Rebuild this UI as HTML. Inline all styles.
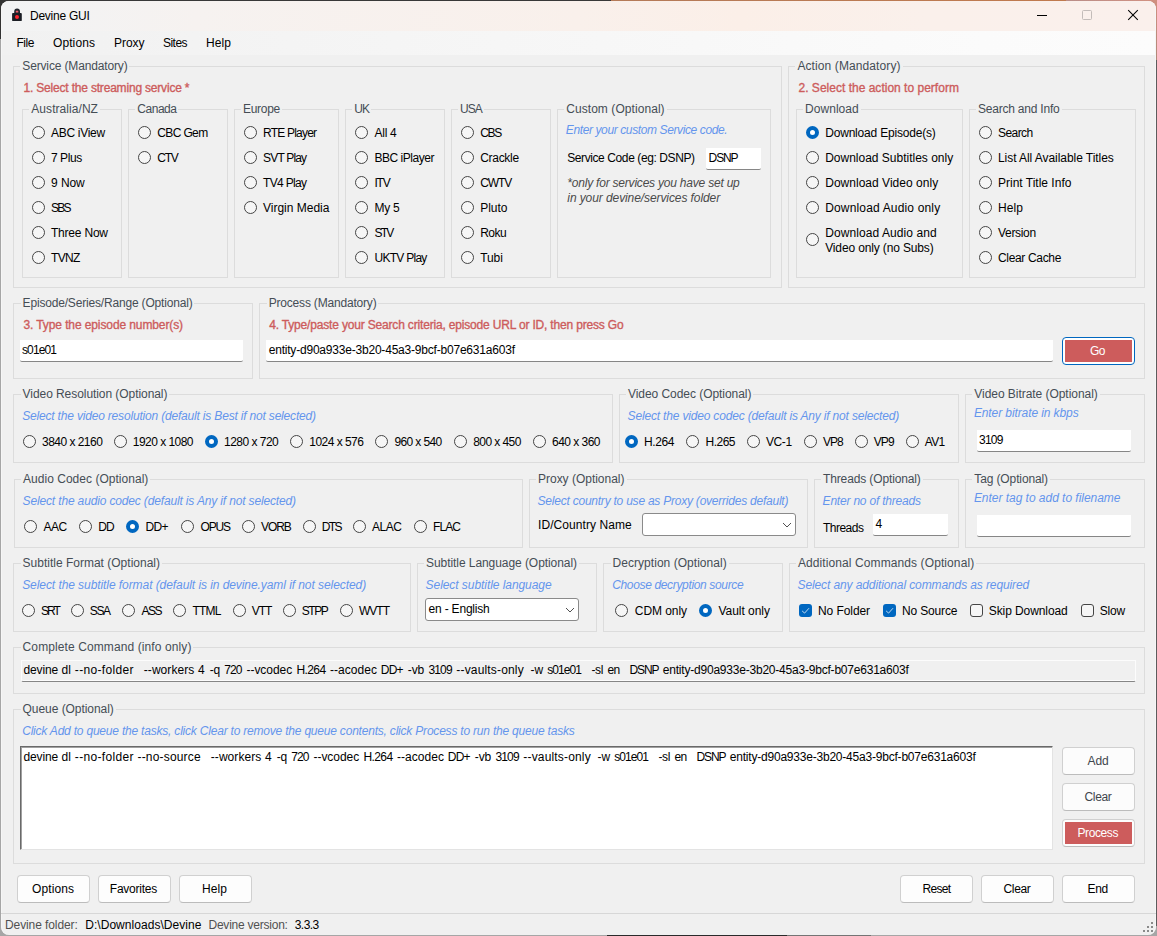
<!DOCTYPE html>
<html><head><meta charset="utf-8"><title>Devine GUI</title>
<style>
html,body{margin:0;padding:0;}
body{width:1157px;height:936px;overflow:hidden;background:#bdbdbd;position:relative;font-family:"Liberation Sans",sans-serif;}
#win{position:absolute;left:0;top:0;width:1157px;height:936px;overflow:hidden;}
#win div,#win span,#win svg{position:absolute;box-sizing:border-box;}
#desk{left:0;top:0;width:1157px;height:936px;background:#a6a6a6;}
#frame{left:1px;top:1px;width:1155px;height:934px;border-radius:8px;background:#f0f0f0;overflow:hidden;}
#frame:after{content:'';position:absolute;left:0;top:0;right:0;bottom:0;border-radius:8px;box-shadow:inset 1px 0 0 #f6f6f6,inset -1px 0 0 #f6f6f6;pointer-events:none;}
#tbar{left:0;top:0;width:1155px;height:30px;background:linear-gradient(90deg,#f2f3f4 0,#f3f3f3 4%,#f6f2f0 17%,#f9f0eb 50%,#fbefe8 64%,#faf0eb 80%,#faf0ec 100%);}
#mbar{left:0;top:30px;width:1155px;height:24px;background:linear-gradient(90deg,#f1f1f1 0,#f4f4f4 25%,#f7f7f7 52%,#fbfbfb 85%,#fcfcfc 100%);}
.t{white-space:pre;font-size:12px;line-height:16px;height:16px;color:#000;}
.gt{color:#454d55;}
.red{color:#cd5c5c;-webkit-text-stroke:0.35px #cd5c5c;}
.hint{color:#6495ed;font-style:italic;}
.note{color:#4a4a4a;font-style:italic;}
.st{color:#505050;}
.w{color:#fff;}
.dis{color:#41464c;}
.gb{border:1px solid #dcdcdc;}
.mask{background:#f0f0f0;}
.rd{border:1px solid #454545;border-radius:50%;background:#f6f6f6;}
.rd.on{border:4px solid #0067c0;background:#fff;}
.cb{border:1px solid #454545;border-radius:3px;background:#f6f6f6;}
.cb.on{border:none;background:#0067c0;}
.cb svg{left:0;top:0;}
.in{background:#fff;border-bottom:1px solid #868686;border-radius:0 0 2px 2px;}
.in.ro{background:#f0f0f0;border:1px solid #fcfcfc;border-bottom:1px solid #868686;box-shadow:inset 0 -1px 0 #fcfcfc;border-radius:0 0 2px 2px;}
.combo{background:#fff;border:1px solid #8a8a8a;border-radius:3px;}
.ta{background:#fff;border-top:1px solid #696969;border-left:1px solid #696969;border-right:1px solid #e3e3e3;border-bottom:1px solid #e3e3e3;box-shadow:inset 1px 1px 0 #a0a0a0;}
.btn{background:#fdfdfd;border:1px solid #d0d0d0;border-bottom-color:#bcbcbc;border-radius:4px;}
.btn.dis{background:#fcfcfc;}
.btn.redf{border:1px solid #0067c0;background:#fff;box-shadow:inset 0 0 0 1px #fff;}
.redfill{background:#cd5c5c;}
.sep{background:#d7d7d7;}

</style></head>
<body>
<div id="win">
<div id="desk"></div>
<div style="left:0;top:0;width:611px;height:12px;background:#383838"></div>
<div style="left:611px;top:0;width:455px;height:12px;background:linear-gradient(90deg,#b47a58,#c07a4e)"></div>
<div style="left:1066px;top:0;width:91px;height:12px;background:linear-gradient(90deg,#b98d88,#d29282)"></div>
<div style="left:0;top:0;width:8px;height:39px;background:#333"></div>
<div style="left:1149px;top:0;width:8px;height:60px;background:linear-gradient(180deg,#d09080,#b08878)"></div>
<div style="left:607px;top:926px;width:180px;height:10px;background:#2a2a2a"></div>
<div style="left:787px;top:926px;width:84px;height:10px;background:#747474"></div>
<div style="left:1150px;top:60px;width:7px;height:866px;background:#5c5c5c"></div>
<div id="frame">
 <div id="tbar"></div>
 <div id="mbar"></div>
</div>
<!-- app icon -->
<svg style="left:9px;top:7px" width="16" height="16" viewBox="0 0 16 16">
 <path d="M5.2 7 V4.5 A2.9 2.9 0 0 1 11 4.5 V7 Z" fill="#23262d"/>
 <rect x="3.1" y="6" width="9.7" height="8.1" rx="0.9" fill="#1b1e25"/>
 <rect x="6.8" y="3.7" width="2.5" height="1.7" rx="0.5" fill="#f0606c"/>
 <circle cx="8" cy="10" r="2" fill="#ff2630"/>
</svg>
<!-- window controls -->
<svg style="left:1036px;top:9px" width="14" height="14" viewBox="0 0 14 14"><path d="M1 6.5 H11" stroke="#000" stroke-width="1"/></svg>
<svg style="left:1080px;top:8px" width="14" height="14" viewBox="0 0 14 14"><rect x="2.5" y="2.5" width="9" height="9" rx="1" fill="none" stroke="#c3bcb9" stroke-width="1"/></svg>
<svg style="left:1125px;top:8px" width="16" height="16" viewBox="0 0 16 16"><path d="M3.2 2.2 L12.8 11.8 M12.8 2.2 L3.2 11.8" stroke="#000" stroke-width="1.05" stroke-linecap="butt"/></svg>
<!-- resize grip -->
<svg style="left:1142px;top:920px" width="12" height="12" viewBox="0 0 12 12" shape-rendering="crispEdges">
 <g fill="#8a8a8a"><rect x="9" y="2" width="2" height="2"/><rect x="5" y="6" width="2" height="2"/><rect x="9" y="6" width="2" height="2"/><rect x="1" y="10" width="2" height="2"/><rect x="5" y="10" width="2" height="2"/><rect x="9" y="10" width="2" height="2"/></g>
</svg>

<div class="gb" style="left:13px;top:66px;width:769px;height:222px;"></div>
<div class="mask" style="left:20.3px;top:65px;width:109.2px;height:3px;"></div>
<div class="gb" style="left:22px;top:109px;width:100px;height:169px;"></div>
<div class="mask" style="left:29.3px;top:108px;width:70.7px;height:3px;"></div>
<div class="gb" style="left:128px;top:109px;width:100px;height:169px;"></div>
<div class="mask" style="left:135.3px;top:108px;width:43.19999999999999px;height:3px;"></div>
<div class="gb" style="left:234px;top:109px;width:105px;height:169px;"></div>
<div class="mask" style="left:241px;top:108px;width:41px;height:3px;"></div>
<div class="gb" style="left:345px;top:109px;width:100px;height:169px;"></div>
<div class="mask" style="left:352.3px;top:108px;width:18.69999999999999px;height:3px;"></div>
<div class="gb" style="left:451px;top:109px;width:100px;height:169px;"></div>
<div class="mask" style="left:458px;top:108px;width:25.69999999999999px;height:3px;"></div>
<div class="gb" style="left:557px;top:109px;width:214px;height:169px;"></div>
<div class="mask" style="left:564.2px;top:108px;width:102.5px;height:3px;"></div>
<div class="rd" style="left:32.0px;top:126.0px;width:13px;height:13px;"></div>
<div class="rd" style="left:32.0px;top:151.0px;width:13px;height:13px;"></div>
<div class="rd" style="left:32.0px;top:176.0px;width:13px;height:13px;"></div>
<div class="rd" style="left:32.0px;top:201.0px;width:13px;height:13px;"></div>
<div class="rd" style="left:32.0px;top:226.0px;width:13px;height:13px;"></div>
<div class="rd" style="left:32.0px;top:251.0px;width:13px;height:13px;"></div>
<div class="rd" style="left:138.0px;top:126.0px;width:13px;height:13px;"></div>
<div class="rd" style="left:138.0px;top:151.0px;width:13px;height:13px;"></div>
<div class="rd" style="left:244.0px;top:126.0px;width:13px;height:13px;"></div>
<div class="rd" style="left:244.0px;top:151.0px;width:13px;height:13px;"></div>
<div class="rd" style="left:244.0px;top:176.0px;width:13px;height:13px;"></div>
<div class="rd" style="left:244.0px;top:201.0px;width:13px;height:13px;"></div>
<div class="rd" style="left:355.0px;top:126.0px;width:13px;height:13px;"></div>
<div class="rd" style="left:355.0px;top:151.0px;width:13px;height:13px;"></div>
<div class="rd" style="left:355.0px;top:176.0px;width:13px;height:13px;"></div>
<div class="rd" style="left:355.0px;top:201.0px;width:13px;height:13px;"></div>
<div class="rd" style="left:355.0px;top:226.0px;width:13px;height:13px;"></div>
<div class="rd" style="left:355.0px;top:251.0px;width:13px;height:13px;"></div>
<div class="rd" style="left:461.0px;top:126.0px;width:13px;height:13px;"></div>
<div class="rd" style="left:461.0px;top:151.0px;width:13px;height:13px;"></div>
<div class="rd" style="left:461.0px;top:176.0px;width:13px;height:13px;"></div>
<div class="rd" style="left:461.0px;top:201.0px;width:13px;height:13px;"></div>
<div class="rd" style="left:461.0px;top:226.0px;width:13px;height:13px;"></div>
<div class="rd" style="left:461.0px;top:251.0px;width:13px;height:13px;"></div>
<div class="in" style="left:706px;top:148px;width:55px;height:22px;"></div>
<div class="gb" style="left:788px;top:66px;width:357px;height:222px;"></div>
<div class="mask" style="left:795.4px;top:65px;width:107.20000000000005px;height:3px;"></div>
<div class="gb" style="left:796px;top:109px;width:167px;height:169px;"></div>
<div class="mask" style="left:803px;top:108px;width:57.799999999999955px;height:3px;"></div>
<div class="gb" style="left:969px;top:109px;width:167px;height:169px;"></div>
<div class="mask" style="left:976px;top:108px;width:85.5px;height:3px;"></div>
<div class="rd on" style="left:806.0px;top:126.0px;width:13px;height:13px;"></div>
<div class="rd" style="left:806.0px;top:151.0px;width:13px;height:13px;"></div>
<div class="rd" style="left:806.0px;top:176.0px;width:13px;height:13px;"></div>
<div class="rd" style="left:806.0px;top:201.0px;width:13px;height:13px;"></div>
<div class="rd" style="left:806.0px;top:233.0px;width:13px;height:13px;"></div>
<div class="rd" style="left:979.0px;top:126.0px;width:13px;height:13px;"></div>
<div class="rd" style="left:979.0px;top:151.0px;width:13px;height:13px;"></div>
<div class="rd" style="left:979.0px;top:176.0px;width:13px;height:13px;"></div>
<div class="rd" style="left:979.0px;top:201.0px;width:13px;height:13px;"></div>
<div class="rd" style="left:979.0px;top:226.0px;width:13px;height:13px;"></div>
<div class="rd" style="left:979.0px;top:251.0px;width:13px;height:13px;"></div>
<div class="gb" style="left:13px;top:303px;width:240px;height:76px;"></div>
<div class="mask" style="left:20.6px;top:302px;width:173.9px;height:3px;"></div>
<div class="in" style="left:20px;top:340px;width:223px;height:22px;"></div>
<div class="gb" style="left:259px;top:303px;width:886px;height:76px;"></div>
<div class="mask" style="left:266.7px;top:302px;width:111.80000000000001px;height:3px;"></div>
<div class="in" style="left:266px;top:340px;width:787px;height:22px;"></div>
<div class="btn redf" style="left:1062px;top:337px;width:73px;height:28px;"></div>
<div class="redfill" style="left:1065px;top:340px;width:67px;height:22px;"></div>
<div class="gb" style="left:13px;top:394px;width:600px;height:69px;"></div>
<div class="mask" style="left:20.6px;top:393px;width:148.8px;height:3px;"></div>
<div class="rd" style="left:23.0px;top:435.0px;width:13px;height:13px;"></div>
<div class="rd" style="left:114.0px;top:435.0px;width:13px;height:13px;"></div>
<div class="rd on" style="left:205.0px;top:435.0px;width:13px;height:13px;"></div>
<div class="rd" style="left:290.0px;top:435.0px;width:13px;height:13px;"></div>
<div class="rd" style="left:375.0px;top:435.0px;width:13px;height:13px;"></div>
<div class="rd" style="left:454.0px;top:435.0px;width:13px;height:13px;"></div>
<div class="rd" style="left:533.0px;top:435.0px;width:13px;height:13px;"></div>
<div class="gb" style="left:619px;top:394px;width:340px;height:69px;"></div>
<div class="mask" style="left:626px;top:393px;width:127.39999999999998px;height:3px;"></div>
<div class="rd on" style="left:625.0px;top:435.0px;width:13px;height:13px;"></div>
<div class="rd" style="left:686.0px;top:435.0px;width:13px;height:13px;"></div>
<div class="rd" style="left:747.0px;top:435.0px;width:13px;height:13px;"></div>
<div class="rd" style="left:804.0px;top:435.0px;width:13px;height:13px;"></div>
<div class="rd" style="left:855.0px;top:435.0px;width:13px;height:13px;"></div>
<div class="rd" style="left:906.0px;top:435.0px;width:13px;height:13px;"></div>
<div class="gb" style="left:965px;top:394px;width:180px;height:69px;"></div>
<div class="mask" style="left:972.3px;top:393px;width:127.40000000000009px;height:3px;"></div>
<div class="in" style="left:977px;top:430px;width:154px;height:22px;"></div>
<div class="gb" style="left:14px;top:479px;width:509px;height:69px;"></div>
<div class="mask" style="left:21px;top:478px;width:129.4px;height:3px;"></div>
<div class="rd" style="left:24.0px;top:520.0px;width:13px;height:13px;"></div>
<div class="rd" style="left:79.0px;top:520.0px;width:13px;height:13px;"></div>
<div class="rd on" style="left:126.0px;top:520.0px;width:13px;height:13px;"></div>
<div class="rd" style="left:181.0px;top:520.0px;width:13px;height:13px;"></div>
<div class="rd" style="left:242.0px;top:520.0px;width:13px;height:13px;"></div>
<div class="rd" style="left:303.0px;top:520.0px;width:13px;height:13px;"></div>
<div class="rd" style="left:353.0px;top:520.0px;width:13px;height:13px;"></div>
<div class="rd" style="left:414.0px;top:520.0px;width:13px;height:13px;"></div>
<div class="gb" style="left:529px;top:479px;width:279px;height:69px;"></div>
<div class="mask" style="left:536px;top:478px;width:90.5px;height:3px;"></div>
<div class="combo" style="left:642px;top:513px;width:154px;height:23px;"></div>
<div class="gb" style="left:814px;top:479px;width:145px;height:69px;"></div>
<div class="mask" style="left:821px;top:478px;width:101.70000000000005px;height:3px;"></div>
<div class="in" style="left:873px;top:514px;width:75px;height:22px;"></div>
<div class="gb" style="left:965px;top:479px;width:180px;height:69px;"></div>
<div class="mask" style="left:972.3px;top:478px;width:77.70000000000005px;height:3px;"></div>
<div class="in" style="left:977px;top:515px;width:154px;height:22px;"></div>
<div class="gb" style="left:13px;top:563px;width:398px;height:69px;"></div>
<div class="mask" style="left:20.6px;top:562px;width:141.4px;height:3px;"></div>
<div class="rd" style="left:22.0px;top:604.0px;width:13px;height:13px;"></div>
<div class="rd" style="left:71.0px;top:604.0px;width:13px;height:13px;"></div>
<div class="rd" style="left:122.0px;top:604.0px;width:13px;height:13px;"></div>
<div class="rd" style="left:173.0px;top:604.0px;width:13px;height:13px;"></div>
<div class="rd" style="left:233.0px;top:604.0px;width:13px;height:13px;"></div>
<div class="rd" style="left:283.0px;top:604.0px;width:13px;height:13px;"></div>
<div class="rd" style="left:340.0px;top:604.0px;width:13px;height:13px;"></div>
<div class="gb" style="left:417px;top:563px;width:180px;height:69px;"></div>
<div class="mask" style="left:424px;top:562px;width:155px;height:3px;"></div>
<div class="combo" style="left:425px;top:598px;width:154px;height:23px;"></div>
<div class="gb" style="left:603px;top:563px;width:180px;height:69px;"></div>
<div class="mask" style="left:610.6px;top:562px;width:118.10000000000002px;height:3px;"></div>
<div class="rd" style="left:615.0px;top:604.0px;width:13px;height:13px;"></div>
<div class="rd on" style="left:699.0px;top:604.0px;width:13px;height:13px;"></div>
<div class="gb" style="left:789px;top:563px;width:356px;height:69px;"></div>
<div class="mask" style="left:795.9px;top:562px;width:180.39999999999998px;height:3px;"></div>
<div class="cb on" style="left:799.0px;top:604.0px;width:13px;height:13px;"><svg width="13" height="13" viewBox="0 0 13 13"><path d="M3.1 6.9 L5.6 9.1 L10 4.2" fill="none" stroke="#fff" stroke-width="0.8" stroke-opacity="0.92"/></svg></div>
<div class="cb on" style="left:883.0px;top:604.0px;width:13px;height:13px;"><svg width="13" height="13" viewBox="0 0 13 13"><path d="M3.1 6.9 L5.6 9.1 L10 4.2" fill="none" stroke="#fff" stroke-width="0.8" stroke-opacity="0.92"/></svg></div>
<div class="cb" style="left:970.0px;top:604.0px;width:13px;height:13px;"></div>
<div class="cb" style="left:1081.0px;top:604.0px;width:13px;height:13px;"></div>
<div class="gb" style="left:13px;top:647px;width:1132px;height:47px;"></div>
<div class="mask" style="left:20.6px;top:646px;width:172.9px;height:3px;"></div>
<div class="in ro" style="left:21px;top:660px;width:1115px;height:22px;"></div>
<div class="gb" style="left:13px;top:709px;width:1132px;height:155px;"></div>
<div class="mask" style="left:20.6px;top:708px;width:95.19999999999999px;height:3px;"></div>
<div class="ta" style="left:20px;top:746px;width:1033px;height:104px;"></div>
<div class="btn dis" style="left:1062px;top:747px;width:73px;height:28px;"></div>
<div class="btn dis" style="left:1062px;top:783px;width:73px;height:28px;"></div>
<div class="btn red" style="left:1062px;top:819px;width:73px;height:28px;"></div>
<div class="redfill" style="left:1065px;top:822px;width:67px;height:22px;"></div>
<div class="btn " style="left:17px;top:875px;width:73px;height:28px;"></div>
<div class="btn " style="left:98px;top:875px;width:73px;height:28px;"></div>
<div class="btn " style="left:179px;top:875px;width:73px;height:28px;"></div>
<div class="btn " style="left:900px;top:875px;width:73px;height:28px;"></div>
<div class="btn " style="left:981px;top:875px;width:73px;height:28px;"></div>
<div class="btn " style="left:1062px;top:875px;width:73px;height:28px;"></div>
<div class="sep" style="left:1px;top:913px;width:1155px;height:1px;"></div>
<span class="t tt" style="left:30.0px;top:7.5px;letter-spacing:-0.253px;">Devine GUI</span>
<span class="t mn" style="left:16.5px;top:35.0px;letter-spacing:-0.461px;">File</span>
<span class="t mn" style="left:53.0px;top:35.0px;letter-spacing:0.092px;">Options</span>
<span class="t mn" style="left:114.0px;top:35.0px;letter-spacing:-0.037px;">Proxy</span>
<span class="t mn" style="left:163.0px;top:35.0px;letter-spacing:-0.537px;">Sites</span>
<span class="t mn" style="left:206.0px;top:35.0px;letter-spacing:0.078px;">Help</span>
<span class="t gt" style="left:22.3px;top:58.0px;letter-spacing:-0.150px;">Service (Mandatory)</span>
<span class="t red" style="left:23.5px;top:80.0px;letter-spacing:-0.190px;">1. Select the streaming service *</span>
<span class="t gt" style="left:31.3px;top:101.0px;letter-spacing:0.056px;">Australia/NZ</span>
<span class="t gt" style="left:137.3px;top:101.0px;letter-spacing:-0.474px;">Canada</span>
<span class="t gt" style="left:243.0px;top:101.0px;letter-spacing:-0.284px;">Europe</span>
<span class="t gt" style="left:354.3px;top:101.0px;letter-spacing:-0.986px;">UK</span>
<span class="t gt" style="left:460.0px;top:101.0px;letter-spacing:-0.996px;">USA</span>
<span class="t gt" style="left:566.2px;top:101.0px;letter-spacing:0.066px;">Custom (Optional)</span>
<span class="t" style="left:51.0px;top:125.0px;letter-spacing:-0.297px;">ABC iView</span>
<span class="t" style="left:51.0px;top:150.0px;letter-spacing:-0.443px;">7 Plus</span>
<span class="t" style="left:51.0px;top:175.0px;letter-spacing:-0.063px;">9 Now</span>
<span class="t" style="left:51.0px;top:200.0px;letter-spacing:-1.772px;">SBS</span>
<span class="t" style="left:51.0px;top:225.0px;letter-spacing:-0.210px;">Three Now</span>
<span class="t" style="left:51.0px;top:250.0px;letter-spacing:-0.661px;">TVNZ</span>
<span class="t" style="left:157.3px;top:125.0px;letter-spacing:-0.641px;">CBC Gem</span>
<span class="t" style="left:157.3px;top:150.0px;letter-spacing:-1.267px;">CTV</span>
<span class="t" style="left:263.0px;top:125.0px;letter-spacing:-0.784px;">RTE Player</span>
<span class="t" style="left:263.0px;top:150.0px;letter-spacing:-0.814px;">SVT Play</span>
<span class="t" style="left:263.0px;top:175.0px;letter-spacing:-0.673px;">TV4 Play</span>
<span class="t" style="left:263.0px;top:200.0px;letter-spacing:-0.007px;">Virgin Media</span>
<span class="t" style="left:374.5px;top:125.0px;letter-spacing:-0.269px;">All 4</span>
<span class="t" style="left:374.5px;top:150.0px;letter-spacing:-0.472px;">BBC iPlayer</span>
<span class="t" style="left:374.5px;top:175.0px;letter-spacing:-1.224px;">ITV</span>
<span class="t" style="left:374.5px;top:200.0px;letter-spacing:-0.254px;">My 5</span>
<span class="t" style="left:374.5px;top:225.0px;letter-spacing:-1.781px;">STV</span>
<span class="t" style="left:374.5px;top:250.0px;letter-spacing:-0.732px;">UKTV Play</span>
<span class="t" style="left:480.2px;top:125.0px;letter-spacing:-1.362px;">CBS</span>
<span class="t" style="left:480.2px;top:150.0px;letter-spacing:-0.298px;">Crackle</span>
<span class="t" style="left:480.2px;top:175.0px;letter-spacing:-1.057px;">CWTV</span>
<span class="t" style="left:480.2px;top:200.0px;letter-spacing:-0.052px;">Pluto</span>
<span class="t" style="left:480.2px;top:225.0px;letter-spacing:-0.479px;">Roku</span>
<span class="t" style="left:480.2px;top:250.0px;letter-spacing:-0.077px;">Tubi</span>
<span class="t hint" style="left:565.8px;top:122.0px;letter-spacing:-0.385px;">Enter your custom Service code.</span>
<span class="t" style="left:567.2px;top:150.0px;letter-spacing:-0.401px;">Service Code (eg: DSNP)</span>
<span class="t" style="left:708.6px;top:150.0px;letter-spacing:-1.111px;">DSNP</span>
<span class="t note" style="left:567.3px;top:175.0px;letter-spacing:-0.210px;">*only for services you have set up</span>
<span class="t note" style="left:567.3px;top:190.0px;letter-spacing:-0.087px;">in your devine/services folder</span>
<span class="t gt" style="left:797.4px;top:58.0px;letter-spacing:0.101px;">Action (Mandatory)</span>
<span class="t red" style="left:798.5px;top:80.0px;letter-spacing:0.010px;">2. Select the action to perform</span>
<span class="t gt" style="left:805.0px;top:101.0px;letter-spacing:0.053px;">Download</span>
<span class="t gt" style="left:978.0px;top:101.0px;letter-spacing:-0.216px;">Search and Info</span>
<span class="t" style="left:825.2px;top:125.0px;letter-spacing:-0.188px;">Download Episode(s)</span>
<span class="t" style="left:825.2px;top:150.0px;letter-spacing:-0.003px;">Download Subtitles only</span>
<span class="t" style="left:825.2px;top:175.0px;letter-spacing:0.025px;">Download Video only</span>
<span class="t" style="left:825.2px;top:200.0px;letter-spacing:0.159px;">Download Audio only</span>
<span class="t" style="left:825.2px;top:224.5px;letter-spacing:0.078px;">Download Audio and</span>
<span class="t" style="left:825.2px;top:239.5px;letter-spacing:-0.139px;">Video only (no Subs)</span>
<span class="t" style="left:998.0px;top:125.0px;letter-spacing:-0.572px;">Search</span>
<span class="t" style="left:998.0px;top:150.0px;letter-spacing:-0.059px;">List All Available Titles</span>
<span class="t" style="left:998.0px;top:175.0px;letter-spacing:0.002px;">Print Title Info</span>
<span class="t" style="left:998.0px;top:200.0px;letter-spacing:0.053px;">Help</span>
<span class="t" style="left:998.0px;top:225.0px;letter-spacing:-0.319px;">Version</span>
<span class="t" style="left:998.0px;top:250.0px;letter-spacing:-0.337px;">Clear Cache</span>
<span class="t gt" style="left:22.6px;top:295.0px;letter-spacing:-0.179px;">Episode/Series/Range (Optional)</span>
<span class="t red" style="left:23.5px;top:317.0px;letter-spacing:-0.105px;">3. Type the episode number(s)</span>
<span class="t" style="left:22.0px;top:342.0px;letter-spacing:-0.896px;">s01e01</span>
<span class="t gt" style="left:268.7px;top:295.0px;letter-spacing:-0.188px;">Process (Mandatory)</span>
<span class="t red" style="left:269.2px;top:317.0px;letter-spacing:-0.175px;">4. Type/paste your Search criteria, episode URL or ID, then press Go</span>
<span class="t" style="left:268.7px;top:342.0px;letter-spacing:-0.204px;">entity-d90a933e-3b20-45a3-9bcf-b07e631a603f</span>
<span class="t bt w" style="left:1090.0px;top:342.5px;letter-spacing:-0.508px;">Go</span>
<span class="t gt" style="left:22.6px;top:386.0px;letter-spacing:-0.064px;">Video Resolution (Optional)</span>
<span class="t hint" style="left:22.2px;top:408.0px;letter-spacing:-0.183px;">Select the video resolution (default is Best if not selected)</span>
<span class="t" style="left:42.0px;top:433.5px;letter-spacing:-0.524px;">3840 x 2160</span>
<span class="t" style="left:132.8px;top:433.5px;letter-spacing:-0.533px;">1920 x 1080</span>
<span class="t" style="left:224.0px;top:433.5px;letter-spacing:-0.519px;">1280 x 720</span>
<span class="t" style="left:309.3px;top:433.5px;letter-spacing:-0.529px;">1024 x 576</span>
<span class="t" style="left:394.5px;top:433.5px;letter-spacing:-0.624px;">960 x 540</span>
<span class="t" style="left:473.2px;top:433.5px;letter-spacing:-0.569px;">800 x 450</span>
<span class="t" style="left:552.0px;top:433.5px;letter-spacing:-0.524px;">640 x 360</span>
<span class="t gt" style="left:628.0px;top:386.0px;letter-spacing:-0.051px;">Video Codec (Optional)</span>
<span class="t hint" style="left:627.6px;top:408.0px;letter-spacing:-0.174px;">Select the video codec (default is Any if not selected)</span>
<span class="t" style="left:644.0px;top:433.5px;letter-spacing:-0.406px;">H.264</span>
<span class="t" style="left:705.5px;top:433.5px;letter-spacing:-0.506px;">H.265</span>
<span class="t" style="left:765.9px;top:433.5px;letter-spacing:-0.386px;">VC-1</span>
<span class="t" style="left:823.0px;top:433.5px;letter-spacing:-0.963px;">VP8</span>
<span class="t" style="left:873.7px;top:433.5px;letter-spacing:-0.863px;">VP9</span>
<span class="t" style="left:924.8px;top:433.5px;letter-spacing:-0.732px;">AV1</span>
<span class="t gt" style="left:974.3px;top:386.0px;letter-spacing:-0.046px;">Video Bitrate (Optional)</span>
<span class="t hint" style="left:973.9px;top:405.0px;letter-spacing:-0.097px;">Enter bitrate in kbps</span>
<span class="t" style="left:979.0px;top:432.0px;letter-spacing:-0.751px;">3109</span>
<span class="t gt" style="left:23.0px;top:471.0px;letter-spacing:0.030px;">Audio Codec (Optional)</span>
<span class="t hint" style="left:22.6px;top:493.0px;letter-spacing:-0.153px;">Select the audio codec (default is Any if not selected)</span>
<span class="t" style="left:43.6px;top:518.5px;letter-spacing:-0.529px;">AAC</span>
<span class="t" style="left:98.2px;top:518.5px;letter-spacing:-0.872px;">DD</span>
<span class="t" style="left:145.4px;top:518.5px;letter-spacing:-0.581px;">DD+</span>
<span class="t" style="left:200.5px;top:518.5px;letter-spacing:-1.129px;">OPUS</span>
<span class="t" style="left:261.0px;top:518.5px;letter-spacing:-1.079px;">VORB</span>
<span class="t" style="left:321.8px;top:518.5px;letter-spacing:-1.633px;">DTS</span>
<span class="t" style="left:372.0px;top:518.5px;letter-spacing:-0.465px;">ALAC</span>
<span class="t" style="left:433.0px;top:518.5px;letter-spacing:-0.922px;">FLAC</span>
<span class="t gt" style="left:538.0px;top:471.0px;letter-spacing:-0.013px;">Proxy (Optional)</span>
<span class="t hint" style="left:537.6px;top:493.0px;letter-spacing:-0.230px;">Select country to use as Proxy (overrides default)</span>
<span class="t" style="left:538.0px;top:517.0px;letter-spacing:0.066px;">ID/Country Name</span>
<span class="t gt" style="left:823.0px;top:471.0px;letter-spacing:-0.130px;">Threads (Optional)</span>
<span class="t hint" style="left:822.6px;top:493.0px;letter-spacing:-0.204px;">Enter no of threads</span>
<span class="t" style="left:823.0px;top:519.5px;letter-spacing:-0.519px;">Threads</span>
<span class="t" style="left:875.5px;top:516.0px;letter-spacing:-0.688px;">4</span>
<span class="t gt" style="left:974.3px;top:471.0px;letter-spacing:-0.120px;">Tag (Optional)</span>
<span class="t hint" style="left:973.9px;top:489.5px;letter-spacing:-0.030px;">Enter tag to add to filename</span>
<span class="t gt" style="left:22.6px;top:555.0px;letter-spacing:0.000px;">Subtitle Format (Optional)</span>
<span class="t hint" style="left:22.2px;top:577.0px;letter-spacing:-0.071px;">Select the subtitle format (default is in devine.yaml if not selected)</span>
<span class="t" style="left:41.0px;top:602.5px;letter-spacing:-1.932px;">SRT</span>
<span class="t" style="left:89.7px;top:602.5px;letter-spacing:-1.305px;">SSA</span>
<span class="t" style="left:141.4px;top:602.5px;letter-spacing:-1.472px;">ASS</span>
<span class="t" style="left:192.5px;top:602.5px;letter-spacing:-0.811px;">TTML</span>
<span class="t" style="left:251.7px;top:602.5px;letter-spacing:-1.057px;">VTT</span>
<span class="t" style="left:301.8px;top:602.5px;letter-spacing:-1.461px;">STPP</span>
<span class="t" style="left:359.0px;top:602.5px;letter-spacing:-1.000px;">WVTT</span>
<span class="t gt" style="left:426.0px;top:555.0px;letter-spacing:-0.064px;">Subtitle Language (Optional)</span>
<span class="t hint" style="left:425.6px;top:577.0px;letter-spacing:-0.060px;">Select subtitle language</span>
<span class="t" style="left:428.6px;top:600.5px;letter-spacing:-0.198px;">en - English</span>
<span class="t gt" style="left:612.6px;top:555.0px;letter-spacing:0.034px;">Decryption (Optional)</span>
<span class="t hint" style="left:612.2px;top:577.0px;letter-spacing:-0.347px;">Choose decryption source</span>
<span class="t" style="left:634.8px;top:602.5px;letter-spacing:-0.061px;">CDM only</span>
<span class="t" style="left:718.4px;top:602.5px;letter-spacing:-0.021px;">Vault only</span>
<span class="t gt" style="left:797.9px;top:555.0px;letter-spacing:0.099px;">Additional Commands (Optional)</span>
<span class="t hint" style="left:797.5px;top:577.0px;letter-spacing:-0.108px;">Select any additional commands as required</span>
<span class="t" style="left:818.0px;top:602.5px;letter-spacing:-0.076px;">No Folder</span>
<span class="t" style="left:902.0px;top:602.5px;letter-spacing:-0.156px;">No Source</span>
<span class="t" style="left:988.8px;top:602.5px;letter-spacing:-0.088px;">Skip Download</span>
<span class="t" style="left:1099.7px;top:602.5px;letter-spacing:-0.179px;">Slow</span>
<span class="t gt" style="left:22.6px;top:639.0px;letter-spacing:0.101px;">Complete Command (info only)</span>
<span class="t" style="left:23.4px;top:662.0px;letter-spacing:-0.096px;">devine</span>
<span class="t" style="left:61.6px;top:662.0px;letter-spacing:0.028px;">dl</span>
<span class="t" style="left:74.8px;top:662.0px;letter-spacing:0.336px;">--no-folder</span>
<span class="t" style="left:143.8px;top:662.0px;letter-spacing:0.056px;">--workers</span>
<span class="t" style="left:198.0px;top:662.0px;letter-spacing:-1.887px;">4</span>
<span class="t" style="left:209.7px;top:662.0px;letter-spacing:-0.186px;">-q</span>
<span class="t" style="left:224.2px;top:662.0px;letter-spacing:-0.877px;">720</span>
<span class="t" style="left:246.5px;top:662.0px;letter-spacing:-0.052px;">--vcodec</span>
<span class="t" style="left:296.4px;top:662.0px;letter-spacing:-0.586px;">H.264</span>
<span class="t" style="left:330.0px;top:662.0px;letter-spacing:0.039px;">--acodec</span>
<span class="t" style="left:380.8px;top:662.0px;letter-spacing:-0.815px;">DD+</span>
<span class="t" style="left:407.8px;top:662.0px;letter-spacing:-0.124px;">-vb</span>
<span class="t" style="left:428.4px;top:662.0px;letter-spacing:-0.826px;">3109</span>
<span class="t" style="left:456.3px;top:662.0px;letter-spacing:0.172px;">--vaults-only</span>
<span class="t" style="left:530.5px;top:662.0px;letter-spacing:0.064px;">-w</span>
<span class="t" style="left:547.3px;top:662.0px;letter-spacing:-0.946px;">s01e01</span>
<span class="t" style="left:591.5px;top:662.0px;letter-spacing:-0.391px;">-sl</span>
<span class="t" style="left:607.5px;top:662.0px;letter-spacing:-0.680px;">en</span>
<span class="t" style="left:629.4px;top:662.0px;letter-spacing:-1.061px;">DSNP</span>
<span class="t" style="left:662.8px;top:662.0px;letter-spacing:-0.211px;">entity-d90a933e-3b20-45a3-9bcf-b07e631a603f</span>
<span class="t gt" style="left:22.6px;top:701.0px;letter-spacing:-0.054px;">Queue (Optional)</span>
<span class="t hint" style="left:22.2px;top:723.0px;letter-spacing:-0.205px;">Click Add to queue the tasks, click Clear to remove the queue contents, click Process to run the queue tasks</span>
<span class="t" style="left:23.4px;top:748.5px;letter-spacing:-0.096px;">devine</span>
<span class="t" style="left:61.6px;top:748.5px;letter-spacing:0.028px;">dl</span>
<span class="t" style="left:74.8px;top:748.5px;letter-spacing:0.336px;">--no-folder</span>
<span class="t" style="left:137.5px;top:748.5px;letter-spacing:0.176px;">--no-source</span>
<span class="t" style="left:210.8px;top:748.5px;letter-spacing:0.056px;">--workers</span>
<span class="t" style="left:265.0px;top:748.5px;letter-spacing:-1.887px;">4</span>
<span class="t" style="left:276.7px;top:748.5px;letter-spacing:-0.186px;">-q</span>
<span class="t" style="left:291.2px;top:748.5px;letter-spacing:-0.877px;">720</span>
<span class="t" style="left:313.5px;top:748.5px;letter-spacing:-0.052px;">--vcodec</span>
<span class="t" style="left:363.4px;top:748.5px;letter-spacing:-0.586px;">H.264</span>
<span class="t" style="left:397.0px;top:748.5px;letter-spacing:0.039px;">--acodec</span>
<span class="t" style="left:447.8px;top:748.5px;letter-spacing:-0.815px;">DD+</span>
<span class="t" style="left:474.8px;top:748.5px;letter-spacing:-0.124px;">-vb</span>
<span class="t" style="left:495.4px;top:748.5px;letter-spacing:-0.826px;">3109</span>
<span class="t" style="left:523.3px;top:748.5px;letter-spacing:0.172px;">--vaults-only</span>
<span class="t" style="left:597.5px;top:748.5px;letter-spacing:0.064px;">-w</span>
<span class="t" style="left:614.3px;top:748.5px;letter-spacing:-0.946px;">s01e01</span>
<span class="t" style="left:658.5px;top:748.5px;letter-spacing:-0.391px;">-sl</span>
<span class="t" style="left:674.5px;top:748.5px;letter-spacing:-0.680px;">en</span>
<span class="t" style="left:696.4px;top:748.5px;letter-spacing:-1.061px;">DSNP</span>
<span class="t" style="left:729.8px;top:748.5px;letter-spacing:-0.211px;">entity-d90a933e-3b20-45a3-9bcf-b07e631a603f</span>
<span class="t bt dis" style="left:1087.5px;top:752.5px;letter-spacing:-0.120px;">Add</span>
<span class="t bt dis" style="left:1084.5px;top:788.5px;letter-spacing:-0.338px;">Clear</span>
<span class="t bt w" style="left:1077.5px;top:824.5px;letter-spacing:-0.408px;">Process</span>
<span class="t bt" style="left:32.0px;top:880.5px;letter-spacing:0.120px;">Options</span>
<span class="t bt" style="left:109.8px;top:880.5px;letter-spacing:-0.251px;">Favorites</span>
<span class="t bt" style="left:202.0px;top:880.5px;letter-spacing:0.078px;">Help</span>
<span class="t bt" style="left:922.5px;top:880.5px;letter-spacing:-0.672px;">Reset</span>
<span class="t bt" style="left:1003.5px;top:880.5px;letter-spacing:-0.338px;">Clear</span>
<span class="t bt" style="left:1087.5px;top:880.5px;letter-spacing:-0.286px;">End</span>
<span class="t st" style="left:5.0px;top:917.0px;letter-spacing:-0.096px;">Devine folder:</span>
<span class="t" style="left:85.2px;top:917.0px;letter-spacing:0.048px;">D:\Downloads\Devine</span>
<span class="t st" style="left:208.5px;top:917.0px;letter-spacing:-0.235px;">Devine version:</span>
<span class="t" style="left:294.7px;top:917.0px;letter-spacing:-0.521px;">3.3.3</span>
<!-- combo arrows -->
<svg style="left:782px;top:521px" width="10" height="8" viewBox="0 0 10 8"><path d="M1 2 L5 6 L9 2" fill="none" stroke="#505050" stroke-width="1"/></svg>
<svg style="left:565px;top:606px" width="10" height="8" viewBox="0 0 10 8"><path d="M1 2 L5 6 L9 2" fill="none" stroke="#505050" stroke-width="1"/></svg>

</div>
</body></html>
